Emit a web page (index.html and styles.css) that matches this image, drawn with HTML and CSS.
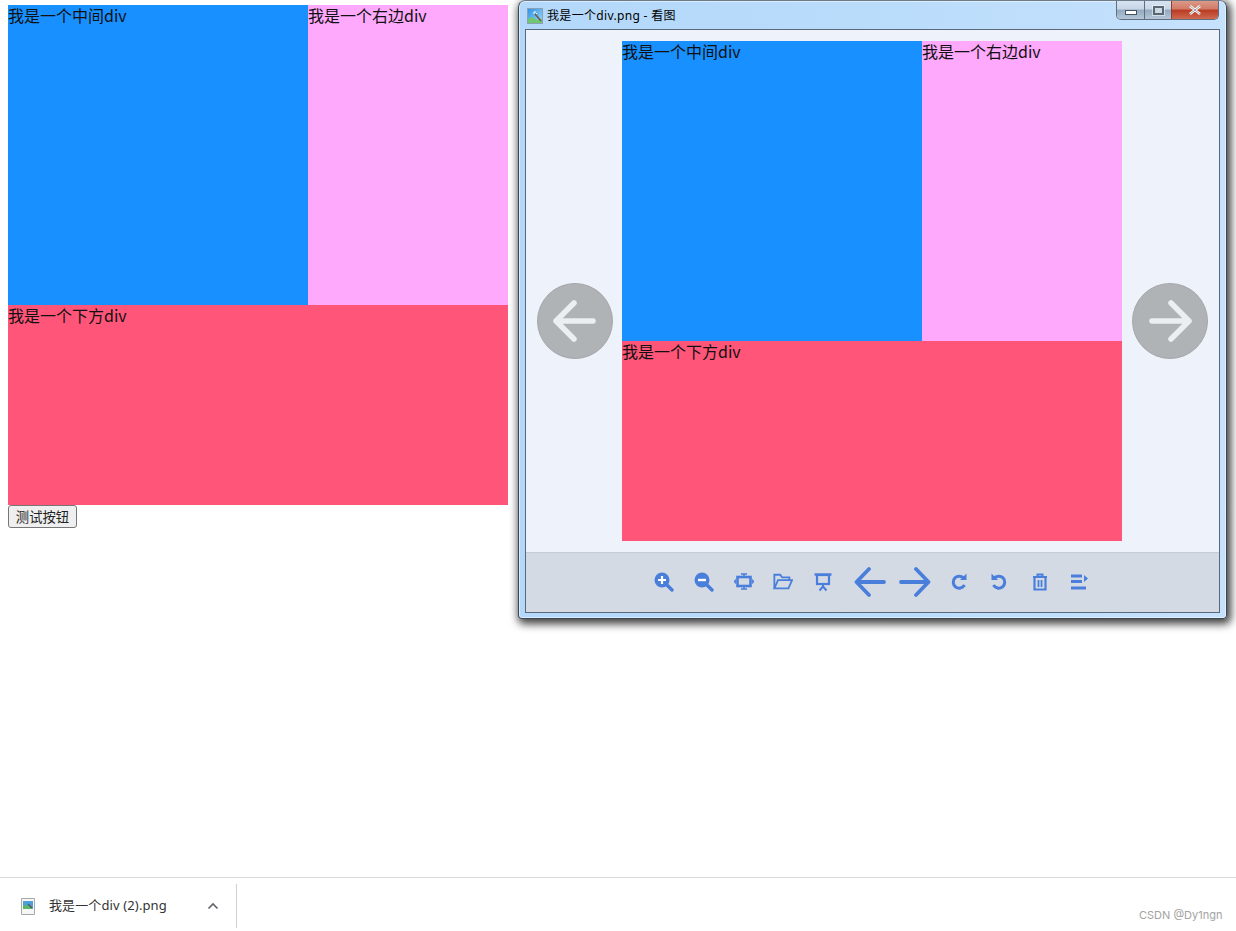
FILE: index.html
```html
<!DOCTYPE html>
<html lang="zh-CN">
<head>
<meta charset="utf-8">
<title>我是一个div</title>
<link rel="stylesheet" href="styles.css">
</head>
<body>
<main class="page">
  <div class="demo">
    <div class="box box-mid">我是一个中间div</div>
    <div class="box box-right">我是一个右边div</div>
    <div class="box box-bottom">我是一个下方div</div>
  </div>
  <button class="test-btn" type="button">测试按钮</button>
</main>

<section class="window">
  <header class="titlebar">
    <svg class="title-icon" viewBox="0 0 16 16" width="16" height="16">
      <defs>
        <linearGradient id="sky" x1="0" y1="0" x2="1" y2="1"><stop offset="0" stop-color="#2f8fe8"/><stop offset="1" stop-color="#9fdcf2"/></linearGradient>
      </defs>
      <rect x="0.5" y="0.5" width="15" height="15" fill="url(#sky)" stroke="#8aa0b5"/>
      <path d="M1 15V11L5 9L10 12L15 11V15Z" fill="#6fc86f"/>
      <path d="M8 6L14 13" stroke="#6b5a50" stroke-width="1.6"/>
      <path d="M8 3V5M6 5H8M9 6L10 5" stroke="#fff" stroke-width="1"/>
    </svg>
    <span class="title-text">我是一个div.png - 看图</span>
    <div class="caption">
      <span class="cap cap-min"><i class="glyph-min"></i></span>
      <span class="cap cap-max"><i class="glyph-max"></i></span>
      <span class="cap cap-close">
        <svg viewBox="0 0 14 10" width="14" height="10"><path d="M2 1L12 9M12 1L2 9" stroke="#fff" stroke-width="2.6" fill="none"/><path d="M2 1L12 9M12 1L2 9" stroke="#5b5b5b" stroke-width="0.6" fill="none"/></svg>
      </span>
    </div>
  </header>
  <div class="panel">
    <div class="viewer">
      <span class="nav-circle">
        <svg viewBox="0 0 76 76" width="76" height="76"><path d="M56 38H19M37 20L19 38L37 56" fill="none" stroke="#eceff2" stroke-width="5.500" stroke-linecap="round" stroke-linejoin="round"/></svg>
      </span>
      <div class="demo">
        <div class="box box-mid">我是一个中间div</div>
        <div class="box box-right">我是一个右边div</div>
        <div class="box box-bottom">我是一个下方div</div>
      </div>
      <span class="nav-circle">
        <svg viewBox="0 0 76 76" width="76" height="76"><path d="M20 38H57M39 20L57 38L39 56" fill="none" stroke="#eceff2" stroke-width="5.500" stroke-linecap="round" stroke-linejoin="round"/></svg>
      </span>
    </div>
    <footer class="toolbar">
      <svg class="tool" viewBox="0 0 20 20"><circle cx="8" cy="8" r="7.500" fill="#4a7edb"/><path d="M13 13L18 18" stroke="#4a7edb" stroke-width="3.400" stroke-linecap="round"/><path d="M4 8H12M8 4V12" stroke="#fff" stroke-width="2.200"/></svg>
      <svg class="tool" viewBox="0 0 20 20"><circle cx="8" cy="8" r="7.500" fill="#4a7edb"/><path d="M13 13L18 18" stroke="#4a7edb" stroke-width="3.400" stroke-linecap="round"/><path d="M4 8H12" stroke="#fff" stroke-width="2.400"/></svg>
      <svg class="tool" viewBox="0 0 20 20" fill="none" stroke="#4a7edb"><rect x="3.500" y="5" width="13" height="9" stroke-width="2.600"/><path d="M7 2H13M10 2V4M7 17H13M10 15V17" stroke-width="1.600"/><path d="M1.500 7.500V11.500L0 9.500ZM18.500 7.500V11.500L20 9.500Z" fill="#4a7edb" stroke-width="0.800"/></svg>
      <svg class="tool" viewBox="0 0 22 20" fill="none" stroke="#4a7edb" stroke-width="2"><path d="M1.500 17V2H8L10 5H18V8"/><path d="M1.500 17L5.500 8H21L17 17Z"/></svg>
      <svg class="tool" viewBox="0 0 20 20" fill="none" stroke="#4a7edb"><path d="M1.500 2.500H18.500" stroke-width="2.400"/><rect x="4" y="3" width="12" height="9" stroke-width="2.200"/><path d="M10 12V14.500M10 14.500L6.500 18.500M10 14.500L13.500 18.500" stroke-width="2"/></svg>
      <svg class="tool-arrow arrow-l" viewBox="0 0 32 32" fill="none" stroke="#4a7edb" stroke-width="3.800" stroke-linecap="round" stroke-linejoin="round"><path d="M30 16H3M15 3L2.500 16L15 29"/></svg>
      <svg class="tool-arrow arrow-r" viewBox="0 0 32 32" fill="none" stroke="#4a7edb" stroke-width="3.800" stroke-linecap="round" stroke-linejoin="round"><path d="M2 16H29M17 3L29.500 16L17 29"/></svg>
      <svg class="tool tool-cw" viewBox="0 0 20 20" fill="none"><path d="M15 6.500A6 6 0 1 0 15.500 13" stroke="#4a7edb" stroke-width="3"/><path d="M11 8H17.500V1.500Z" fill="#4a7edb"/></svg>
      <svg class="tool tool-ccw" viewBox="0 0 20 20" fill="none"><path d="M5 6.500A6 6 0 1 1 4.500 13" stroke="#4a7edb" stroke-width="3"/><path d="M9 8H2.500V1.500Z" fill="#4a7edb"/></svg>
      <svg class="tool tool-trash" viewBox="0 0 20 20" fill="none" stroke="#4a7edb"><path d="M3 5H17M7.500 5V2.500H12.500V5" stroke-width="2"/><path d="M4.500 5.500V17.500H15.500V5.500" stroke-width="2.200"/><path d="M8.500 8V15M11.500 8V15" stroke-width="1.800"/></svg>
      <svg class="tool" viewBox="0 0 20 20" fill="#4a7edb"><rect x="2" y="2.500" width="11" height="3"/><rect x="2" y="8" width="11" height="3"/><rect x="2" y="14.500" width="15" height="3"/><path d="M15 3L19 6.500L15 10Z"/></svg>
    </footer>
  </div>
</section>

<footer class="downloads">
  <div class="dl-item">
    <svg class="dl-icon" viewBox="0 0 14 17" width="14" height="17">
      <path d="M0.500 0.500H13.500V16.500H0.500Z" fill="#f6f6f6" stroke="#a8a8a8"/>
      <rect x="2" y="3" width="10" height="8" fill="#4f9fd8"/>
      <path d="M2 11V8L6 7L12 11Z" fill="#58b868"/>
      <path d="M7 6L11 10" stroke="#555" stroke-width="1.200"/>
    </svg>
    <span class="dl-name">我是一个div (2).png</span>
    <svg class="dl-chevron" viewBox="0 0 12 8" width="12" height="8"><path d="M1.500 6.500L6 2L10.500 6.500" fill="none" stroke="#5f6368" stroke-width="1.600"/></svg>
  </div>
  <span class="watermark">CSDN @Dy1ngn</span>
</footer>
</body>
</html>
```
FILE: styles.css
```css
* { box-sizing: border-box; }
html, body { margin: 0; height: 100%; }
body {
  display: flex;
  flex-direction: column;
  height: 931px;
  overflow: hidden;
  background: #fff;
  font-family: "Noto Sans CJK SC", "Noto Sans", sans-serif;
  font-size: 16px;
  color: #000;
}
.page {
  flex: 1;
  padding: 5px 8px 0;
  display: flex;
  flex-direction: column;
  align-items: flex-start;
}
.demo {
  display: flex;
  flex-wrap: wrap;
  width: 500px;
  flex: none;
}
.box { line-height: 20px; color: #111; }
.box-mid { width: 300px; height: 300px; background: #1890ff; }
.box-right { width: 200px; height: 300px; background: #ffa9fd; }
.box-bottom { width: 500px; height: 200px; background: #ff5579; }
.test-btn {
  width: 69px;
  height: 23px;
  padding: 0;
  border: 1px solid #767676;
  border-radius: 3px;
  background: #efefef;
  font-family: inherit;
  font-size: 13.330px;
  line-height: 21px;
  color: #222;
}

/* floating image-viewer window */
.window {
  position: absolute;
  left: 518px;
  top: 0;
  width: 709px;
  height: 619px;
  padding: 0 6px 5px 6px;
  display: flex;
  flex-direction: column;
  border: 1px solid #3c4650;
  border-top-color: #6d7a88;
  border-radius: 7px 7px 4px 4px;
  background: linear-gradient(90deg, #b4d8fa 0%, #b9dcfb 50%, #c6e1fc 100%);
  box-shadow: 0 0 0 1px rgba(255,255,255,.5) inset, 2px 3px 9px 2px rgba(0,0,0,.75);
}
.titlebar {
  height: 28px;
  flex: none;
  display: flex;
  align-items: center;
  gap: 4px;
  margin-left: 2px;
  padding-top: 1px;
}
.title-icon { flex: none; }
.title-text {
  font-family: "Noto Sans", "Noto Sans CJK SC", sans-serif;
  font-size: 12px;
  line-height: 16px;
  letter-spacing: 0.330px;
  color: #000;
}
.caption {
  position: absolute;
  top: 0;
  right: 7px;
  display: flex;
  height: 19px;
  border: 1px solid #5f6f80;
  border-top: 0;
  border-radius: 0 0 5px 5px;
  overflow: hidden;
}
.cap {
  display: flex;
  align-items: center;
  justify-content: center;
  height: 100%;
}
.cap-min {
  width: 28px;
  background: linear-gradient(#d6e4f2 0%, #c6d6e6 45%, #93a9c0 50%, #b4c6d8 100%);
  border-right: 1px solid #5f6f80;
}
.cap-max {
  width: 27px;
  background: linear-gradient(#d6e4f2 0%, #c6d6e6 45%, #93a9c0 50%, #b4c6d8 100%);
  border-right: 1px solid #8f4030;
}
.cap-close {
  width: 46px;
  background: linear-gradient(#dc9a88 0%, #d07a66 45%, #b93a22 50%, #cf6a52 100%);
}
.glyph-min {
  display: block;
  width: 12px;
  height: 5px;
  margin-top: 5px;
  border: 1px solid #46525e;
  background: #fff;
}
.glyph-max {
  display: block;
  width: 11px;
  height: 9px;
  border: 2px solid #5a6672;
  box-shadow: 0 0 0 1px rgba(255,255,255,.5);
  background: #cbd8e5;
}
.panel {
  flex: 1;
  display: flex;
  flex-direction: column;
  border: 1px solid #5a6878;
  background: #edf2fb;
}
.viewer {
  flex: 1;
  display: flex;
  align-items: center;
  justify-content: space-between;
  padding: 0 11px;
}
.viewer .demo { margin: -1px 1px 0 0; }
.nav-circle {
  width: 76px;
  height: 76px;
  margin-top: 60px;
  border-radius: 50%;
  background: #b0b3b6;
  border: 1px solid #a5a8ab;
  display: flex;
  align-items: center;
  justify-content: center;
  flex: none;
}
.nav-circle svg { display: block; flex: none; }
.toolbar {
  height: 60px;
  flex: none;
  display: flex;
  align-items: center;
  justify-content: center;
  gap: 19.700px;
  padding: 0 1.500px 2px 0;
  border-top: 1px solid #c4ccd8;
  background: #d3dae4;
}
.tool { width: 20px; height: 20px; flex: none; display: block; }
.tool-arrow { width: 32px; height: 32px; flex: none; display: block; }
.arrow-l { margin-left: 1.500px; }
.arrow-r { margin-left: -6.500px; }
.tool-cw { margin-left: -2.500px; }
.tool-ccw { margin-left: 0.500px; }
.tool-trash { margin-left: 1px; }

/* download shelf */
.downloads {
  height: 54px;
  flex: none;
  display: flex;
  align-items: stretch;
  border-top: 1px solid #dcdcdc;
  background: #fff;
  padding: 6px 0 3px;
}
.dl-item {
  width: 237px;
  display: flex;
  align-items: center;
  padding-left: 21px;
  border-right: 1px solid #d0d0d0;
}
.dl-icon { flex: none; margin-right: 14px; }
.dl-name {
  font-family: "Noto Sans", "Noto Sans CJK SC", sans-serif;
  font-size: 13px;
  line-height: 16px;
  letter-spacing: 0.120px;
  margin-top: -2px;
  color: #333;
  width: 158px;
  flex: none;
}
.dl-chevron { flex: none; }
.watermark {
  position: absolute;
  left: 1139px;
  top: 908px;
  font-family: "Inter", "Noto Sans", sans-serif;
  font-size: 11px;
  line-height: 14px;
  color: #a3a3a3;
}
```
